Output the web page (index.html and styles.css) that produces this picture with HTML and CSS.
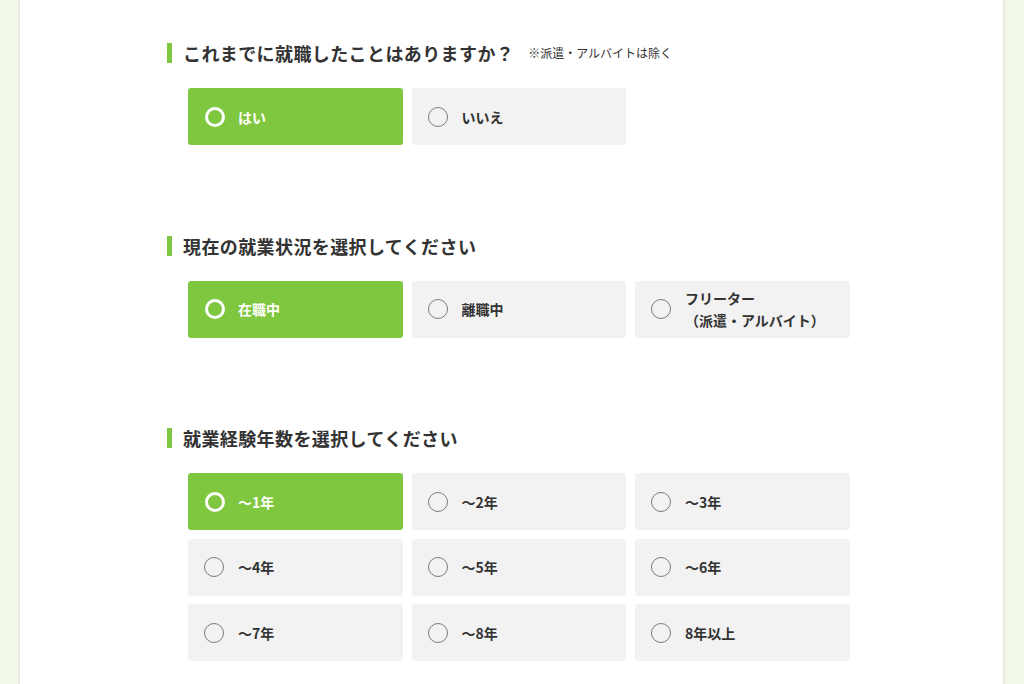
FILE: index.html
```html
<!DOCTYPE html>
<html lang="ja">
<head>
<meta charset="utf-8">
<title>就業状況</title>
<link rel="stylesheet" href="styles.css">
</head>
<body>
<div class="page">
  <main class="panel">
    <section class="question">
      <h2 class="q-title">これまでに就職したことはありますか？<span class="q-note">※派遣・アルバイトは除く</span></h2>
      <div class="options">
        <div class="option selected"><span class="radio"></span><span class="label">はい</span></div>
        <div class="option"><span class="radio"></span><span class="label">いいえ</span></div>
      </div>
    </section>

    <section class="question">
      <h2 class="q-title">現在の就業状況を選択してください</h2>
      <div class="options">
        <div class="option selected"><span class="radio"></span><span class="label">在職中</span></div>
        <div class="option"><span class="radio"></span><span class="label">離職中</span></div>
        <div class="option"><span class="radio"></span><span class="label">フリーター<br>（派遣・アルバイト）</span></div>
      </div>
    </section>

    <section class="question">
      <h2 class="q-title">就業経験年数を選択してください</h2>
      <div class="options">
        <div class="option selected"><span class="radio"></span><span class="label">〜1年</span></div>
        <div class="option"><span class="radio"></span><span class="label">〜2年</span></div>
        <div class="option"><span class="radio"></span><span class="label">〜3年</span></div>
        <div class="option"><span class="radio"></span><span class="label">〜4年</span></div>
        <div class="option"><span class="radio"></span><span class="label">〜5年</span></div>
        <div class="option"><span class="radio"></span><span class="label">〜6年</span></div>
        <div class="option"><span class="radio"></span><span class="label">〜7年</span></div>
        <div class="option"><span class="radio"></span><span class="label">〜8年</span></div>
        <div class="option"><span class="radio"></span><span class="label">8年以上</span></div>
      </div>
    </section>
  </main>
</div>
</body>
</html>
```

FILE: styles.css
```css
html, body {
  margin: 0;
  padding: 0;
  background: #f1f8e9;
  font-family: "Noto Sans CJK JP", "Noto Sans", sans-serif;
  color: #333333;
}

.page {
  padding: 0 19px 0 18px;
  height: 684px;
  overflow: hidden;
}

.panel {
  background: #ffffff;
  border-left: 2px solid #e7ecdf;
  border-right: 2px solid #e7ecdf;
  min-height: 700px;
  padding: 43px 0 0 147px;
  box-sizing: border-box;
}

.question {
  margin-bottom: 90.5px;
}

.q-title {
  display: flex;
  align-items: center;
  margin: 0;
  height: 20px;
  border-left: 5px solid #7fc73f;
  padding-left: 11px;
  font-size: 18px;
  font-weight: 700;
  line-height: 20px;
  letter-spacing: 0.4px;
  color: #333333;
  white-space: nowrap;
}

.q-note {
  font-size: 12px;
  font-weight: 400;
  letter-spacing: 0;
  margin-left: 14px;
  color: #333333;
}

.options {
  display: grid;
  grid-template-columns: repeat(3, 214.5px);
  column-gap: 9px;
  row-gap: 8.5px;
  margin: 25px 0 0 21px;
}

.option {
  display: flex;
  align-items: center;
  height: 57px;
  background: #f2f2f2;
  border-radius: 3px;
  padding-left: 16px;
  box-sizing: border-box;
}

.radio {
  flex: none;
  width: 20px;
  height: 20px;
  box-sizing: border-box;
  border: 1px solid #7a7a7a;
  border-radius: 50%;
  margin-right: 14px;
}

.label {
  font-size: 14px;
  font-weight: 700;
  line-height: 22px;
  color: #333333;
}

.option.selected {
  background: #7fc73f;
}

.option.selected .radio {
  border: 3px solid #ffffff;
  margin-left: 1px;
  margin-right: 13px;
}

.option.selected .label {
  color: #ffffff;
}
```
